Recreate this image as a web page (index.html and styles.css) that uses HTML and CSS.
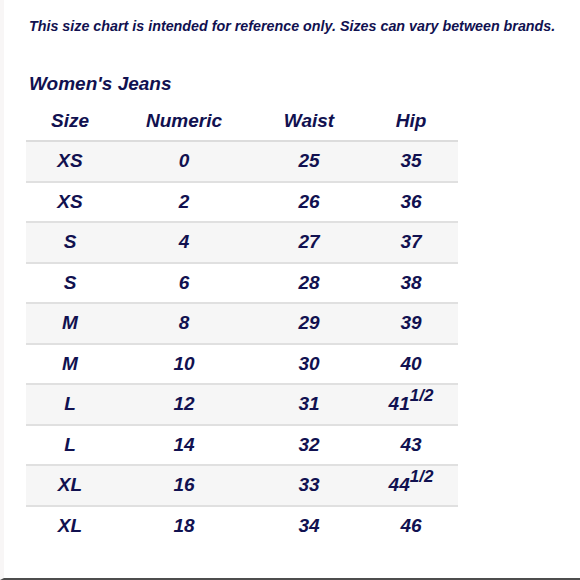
FILE: index.html
```html
<!DOCTYPE html>
<html>
<head>
<meta charset="utf-8">
<link rel="stylesheet" href="styles.css">
</head>
<body>
<div class="page">
  <p class="note">This size chart is intended for reference only. Sizes can vary between brands.</p>
  <h2 class="title">Women's Jeans</h2>
  <table class="chart">
    <thead>
      <tr><th class="c1">Size</th><th class="c2">Numeric</th><th class="c3">Waist</th><th class="c4">Hip</th></tr>
    </thead>
    <tbody>
      <tr><td>XS</td><td>0</td><td>25</td><td>35</td></tr>
      <tr><td>XS</td><td>2</td><td>26</td><td>36</td></tr>
      <tr><td>S</td><td>4</td><td>27</td><td>37</td></tr>
      <tr><td>S</td><td>6</td><td>28</td><td>38</td></tr>
      <tr><td>M</td><td>8</td><td>29</td><td>39</td></tr>
      <tr><td>M</td><td>10</td><td>30</td><td>40</td></tr>
      <tr><td>L</td><td>12</td><td>31</td><td>41<sup>1/2</sup></td></tr>
      <tr><td>L</td><td>14</td><td>32</td><td>43</td></tr>
      <tr><td>XL</td><td>16</td><td>33</td><td>44<sup>1/2</sup></td></tr>
      <tr><td>XL</td><td>18</td><td>34</td><td>46</td></tr>
    </tbody>
  </table>
</div>
</body>
</html>
```
FILE: styles.css
```css
html, body {
  margin: 0;
  padding: 0;
  background: #fff;
}
body {
  width: 580px;
  height: 580px;
  overflow: hidden;
  font-family: "Liberation Sans", Arial, sans-serif;
  font-weight: bold;
  font-style: italic;
  color: #111150;
}
.page {
  box-sizing: border-box;
  height: 580px;
  border-left: 4px solid #f8f6f6;
  border-bottom: 2px solid #4d4d4d;
  padding: 17px 0 0 25px;
}
.note {
  margin: 0;
  font-size: 14.3px;
  line-height: 18px;
}
.title {
  margin: 37px 0 0 0;
  font-size: 19px;
  line-height: 24px;
  font-weight: bold;
}
.chart {
  margin: 5px 0 0 -3px;
  border-collapse: collapse;
  width: 432px;
}
.chart th {
  font-size: 19px;
  height: 39px;
  text-align: center;
  padding: 0;
  vertical-align: middle;
  border-bottom: 2px solid #dcdcdc;
}
.c1 { width: 88px; }
.c2 { width: 140px; }
.c3 { width: 110px; }
.c4 { width: 94px; }
.chart td {
  font-size: 19px;
  height: 38.5px;
  text-align: center;
  padding: 0;
  vertical-align: middle;
  border-bottom: 2px solid #e0e0e0;
}
.chart tbody tr:nth-child(odd) td {
  background: #f6f6f6;
}
.chart tbody tr:last-child td {
  border-bottom: none;
}
.chart sup {
  font-size: 17px;
  line-height: 0;
  vertical-align: 9px;
}
```
